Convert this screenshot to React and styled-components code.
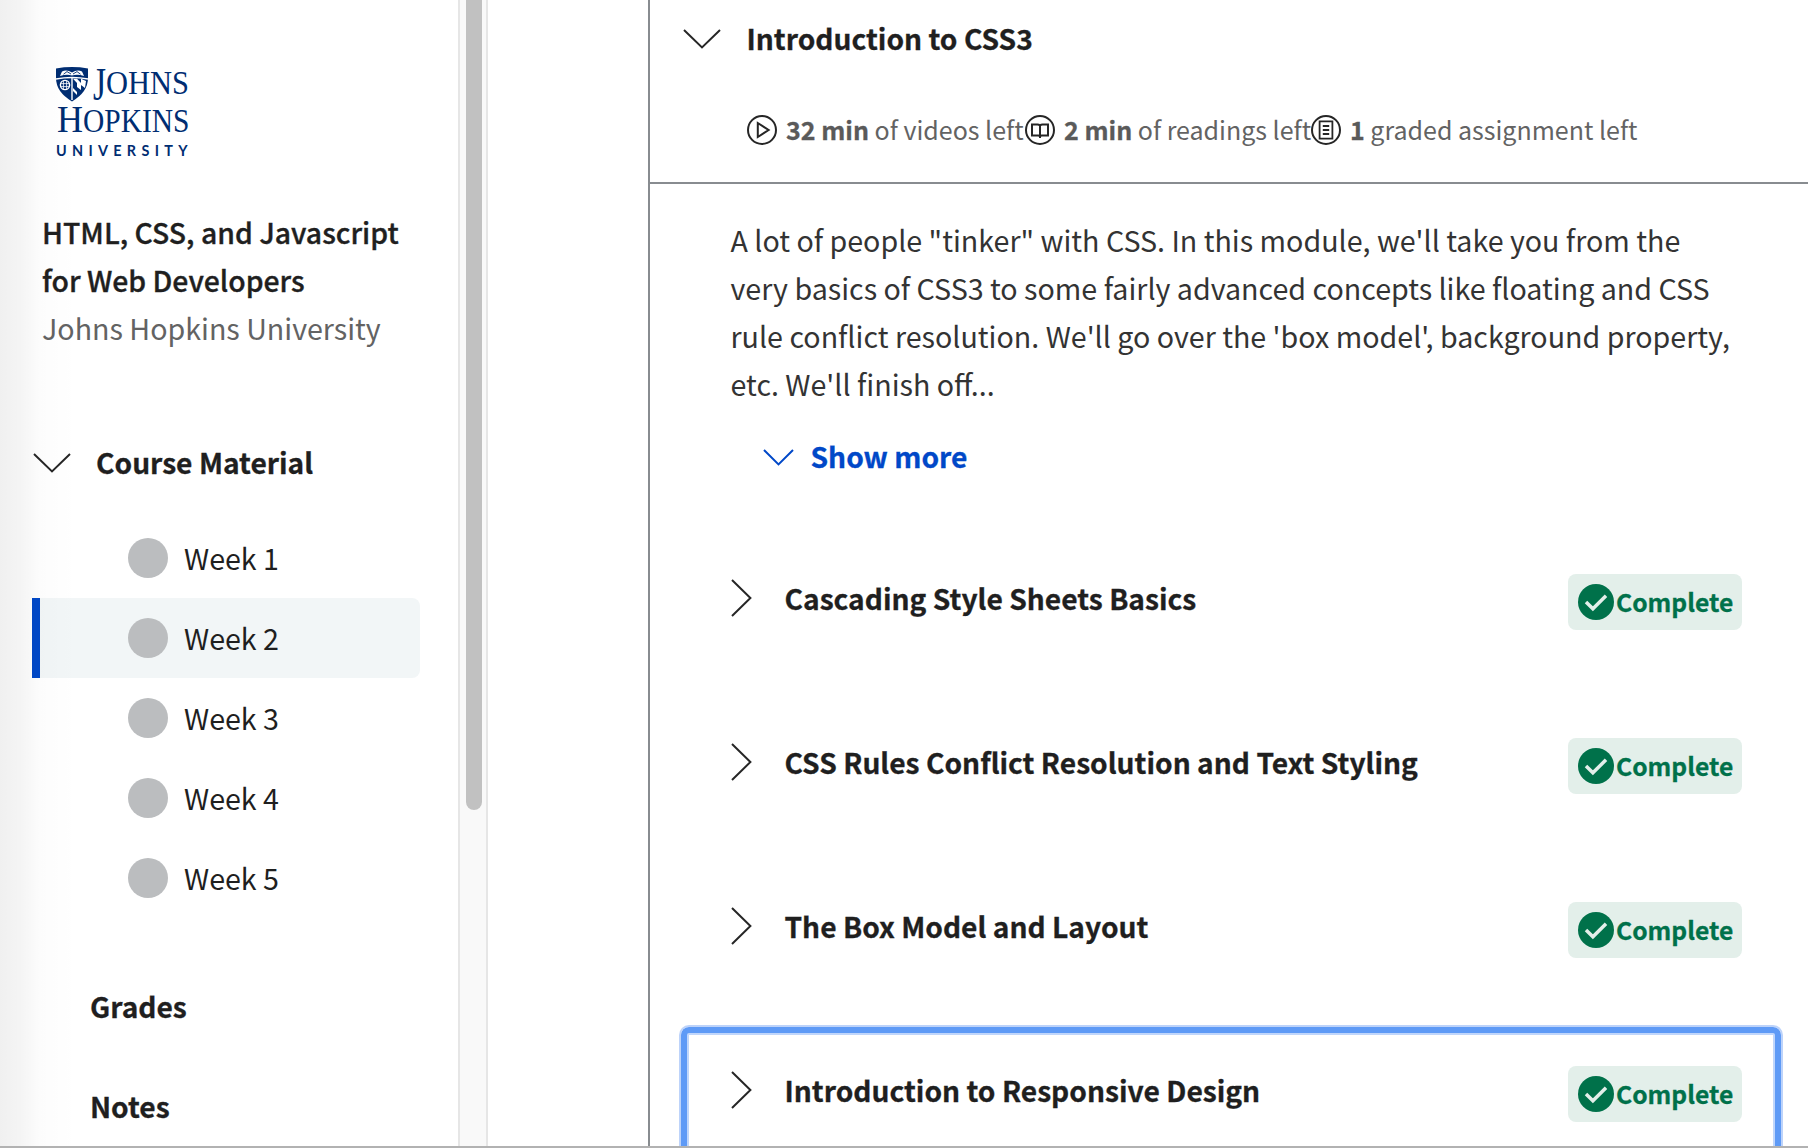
import React from "react";
import styled, { createGlobalStyle } from "styled-components";

const Global = createGlobalStyle`
  * { box-sizing: border-box; }
  body { margin: 0; overflow: hidden; background: #fff; font-family: "Noto Sans CJK SC", "Noto Sans", sans-serif; color: #1f1f1f; }
  h1, h2, h3, p, ul { margin: 0; padding: 0; list-style: none; font-size: inherit; font-weight: inherit; }
  svg { display: block; flex: none; }
`;

const Page = styled.div`
  position: relative;
  display: flex;
  width: 1808px;
  height: 1148px;
  overflow: hidden;
  border-bottom: 2px solid #b2b2b2;
`;

const Sidebar = styled.nav`
  width: 458px;
  flex: none;
  display: flex;
  flex-direction: column;
  padding: 66px 38px 0 32px;
`;

const EdgeShade = styled.div`
  position: absolute;
  left: 0;
  top: 0;
  bottom: 0;
  width: 78px;
  pointer-events: none;
  background: linear-gradient(to right, rgba(0,0,0,.06) 0, rgba(0,0,0,.042) 20px, rgba(0,0,0,.013) 40px, rgba(0,0,0,.004) 64px, transparent);
`;

const Logo = styled.svg`
  margin-left: 23px;
  width: 136px;
  height: 92px;
  overflow: visible;
`;

const CourseInfo = styled.div`
  margin: 50px 0 0 10px;
  font-size: 28.64px;
  line-height: 48px;
  white-space: nowrap;
`;
const CourseName = styled.h1`
  font-size: 28.37px;
  font-weight: 500;
  -webkit-text-stroke: 0.35px currentColor;
  white-space: pre;
`;
const School = styled.p`
  color: #636363;
`;

const SectionHead = styled.div`
  display: flex;
  align-items: center;
  height: 60px;
  margin-top: 80px;
  padding-left: 1px;
  svg { margin-top: 2px; }
`;
const SectionTitle = styled.h2`
  font-size: 28.2px;
  line-height: 48px;
  font-weight: 700;
  -webkit-text-stroke: 0.3px currentColor;
  margin-left: 25px;
`;

const Weeks = styled.ul`
  margin-top: 26px;
`;
const Week = styled.li`
  display: flex;
  align-items: center;
  height: 80px;
  width: 388px;
  padding-left: 88px;
  border-left: 8px solid ${(p) => (p.$active ? "#0048c8" : "transparent")};
  border-radius: 0 8px 8px 0;
  background: ${(p) => (p.$active ? "#f2f6f7" : "transparent")};
  background-clip: padding-box;
  font-size: 28.64px;
  line-height: 48px;
`;
const Dot = styled.span`
  width: 40px;
  height: 40px;
  margin-right: 16px;
  border-radius: 50%;
  background: #bbbdbf;
`;

const NavLink = styled.h2`
  font-size: 28.2px;
  line-height: 48px;
  font-weight: 700;
  -webkit-text-stroke: 0.3px currentColor;
  padding-left: 58px;
  margin-top: ${(p) => p.$gap}px;
`;

const Scrollbar = styled.div`
  width: 30px;
  flex: none;
  padding-left: 6px;
  border: solid #e6e6e6;
  border-width: 0 2px;
  background: #f9f9f9;
`;
const Thumb = styled.div`
  width: 16px;
  height: 810px;
  border-radius: 0 0 8px 8px;
  background: #c1c1c1;
`;

const Main = styled.main`
  flex: 1;
  margin-left: 160px;
  border-left: 2px solid #888c90;
`;

const ModuleHeader = styled.header`
  height: 184px;
  border-bottom: 2px solid #888c90;
`;
const ModuleTitleRow = styled.div`
  display: flex;
  align-items: center;
  height: 78px;
  padding-left: 33px;
`;
const ModuleTitle = styled.h2`
  font-size: 28.2px;
  line-height: 46px;
  margin-top: -2px;
  font-weight: 700;
  -webkit-text-stroke: 0.3px currentColor;
  margin-left: 25.5px;
`;
const Stats = styled.div`
  display: flex;
  align-items: center;
  height: 40px;
  margin-top: 32px;
  padding-left: 96px;
  color: #636363;
  font-size: 25px;
  white-space: nowrap;
`;
const Stat = styled.span`
  display: flex;
  align-items: center;
  height: 40px;
  line-height: 38px;
  width: ${(p) => p.$w}px;
  gap: 8px;
  span { margin-top: -2px; }
  b { color: #5a5a5a; -webkit-text-stroke: 0.3px currentColor; }
`;

const Body = styled.div`
  padding: 32px 26px 0 29px;
`;
const Summary = styled.p`
  padding-left: 51.5px;
  color: #333;
  font-size: 28.64px;
  line-height: 48px;
  white-space: pre;
`;
const ShowMore = styled.div`
  display: flex;
  align-items: center;
  height: 48px;
  margin-top: 24px;
  padding-left: 83.5px;
  gap: 17px;
  color: #0048c8;
  font-size: 28.2px;
  line-height: 48px;
  font-weight: 700;
  -webkit-text-stroke: 0.3px currentColor;
  svg { margin-top: 2px; }
`;

const Lessons = styled.ul`
  margin-top: 53px;
`;
const Lesson = styled.li`
  display: flex;
  height: 164px;
  width: 1104px;
  padding: 31px 31px 0 42px;
  border: 10px solid transparent;
  border-bottom: 0;
  border-radius: 10px 10px 0 0;
  box-shadow: none;
  ${(p) => p.$focused && `
    border: 2px solid #bdd3fa;
    border-bottom: 0;
    padding: 39px 39px 0 50px;
    box-shadow: inset 0 0 0 6px #5e9af6, inset 0 0 0 8px #c0d6fb;
  `}
`;
const Chevron = styled.svg`
  margin-top: 5px;
`;
const LessonTitle = styled.h3`
  flex: 1;
  margin-left: 31.5px;
  font-size: 28.2px;
  line-height: 48px;
  font-weight: 700;
  -webkit-text-stroke: 0.3px currentColor;
  white-space: nowrap;
`;
const Badge = styled.span`
  display: flex;
  align-items: center;
  width: 174px;
  height: 56px;
  padding-left: 10px;
  gap: 2px;
  border-radius: 8px;
  background: #e3efea;
  color: #00714a;
  font-size: 24.65px;
  line-height: 40px;
  font-weight: 700;
  -webkit-text-stroke: 0.3px currentColor;
`;
const BadgeText = styled.span`
  margin-top: -2px;
`;

const Down = ({ w = 38, h = 20, color = "#262626" }) => (
  <svg width={w} height={h} fill="none" stroke={color} strokeWidth="2">
    <path d={`M1 1L${w / 2} ${h - 1.6}L${w - 1} 1`} />
  </svg>
);
const Right = () => (
  <Chevron width="22" height="38" fill="none" stroke="#262626" strokeWidth="2">
    <path d="M1 1L19.4 19L1 37" />
  </Chevron>
);
const Ring = ({ children }) => (
  <svg width="32" height="32" fill="none" stroke="#262626" strokeWidth="2">
    <circle cx="16" cy="16" r="14" />
    {children}
  </svg>
);
const Check = () => (
  <svg width="36" height="36">
    <circle cx="18" cy="18" r="18" fill="#00714a" />
    <path d="M8 18L14.9 24.8L28 11.8" fill="none" stroke="#e3efea" strokeWidth="3.5" />
  </svg>
);

const JhuLogo = () => (
  <Logo viewBox="0 0 136 92" fill="#002d72">
    <path d="M1 2.4Q17 -.4 33 2.4V12Q33 26 17 35.4Q1 26 1 12Z" />
    <path d="M5 10L7 5.4Q12 3.4 17 6.4Q22 3.4 27 5.4L29 10Q22 7.6 17 9.6Q12 7.6 5 10Z" fill="#fff" />
    <path d="M8.5 8.2L12 5.6L16 8M18 8L22 5.6L25.5 8.2" fill="none" stroke="#002d72" strokeWidth=".9" />
    <path d="M1 13Q17 10 33 13" fill="none" stroke="#fff" strokeWidth="1.4" />
    <path d="M17 12V34" stroke="#fff" strokeWidth="1.4" />
    <circle cx="10" cy="19" r="4.6" fill="none" stroke="#fff" strokeWidth="1.4" />
    <path d="M8.4 14.5v9M11.6 14.5v9M5.5 17.6h9M5.5 20.6h9" stroke="#fff" strokeWidth=".8" />
    <path d="M18 12.8L22 17V21L26 24V19L30 22L31 15L26 12.8V17L22 12.8Z" fill="#fff" />
    <path d="M18 22L22 26V29L18 25Z" fill="#fff" />
    <g fontFamily="Liberation Serif, serif">
      <text x="38" y="34" fontSize="46" textLength="13" lengthAdjust="spacingAndGlyphs">J</text>
      <text x="51" y="27.5" fontSize="33" textLength="83" lengthAdjust="spacingAndGlyphs">OHNS</text>
      <text x="2" y="66" fontSize="38" textLength="26" lengthAdjust="spacingAndGlyphs">H</text>
      <text x="28" y="66" fontSize="33" textLength="106.5" lengthAdjust="spacingAndGlyphs">OPKINS</text>
    </g>
    <text x="1" y="89.5" fontFamily="Lato, sans-serif" fontWeight="700" fontSize="14.4" textLength="131.5">UNIVERSITY</text>
  </Logo>
);

const lessons = [
  "Cascading Style Sheets Basics",
  "CSS Rules Conflict Resolution and Text Styling",
  "The Box Model and Layout",
  "Introduction to Responsive Design",
];

export default function App() {
  return (
    <>
      <Global />
      <Page>
        <Sidebar>
          <JhuLogo />
          <CourseInfo>
            <CourseName>{"HTML, CSS, and Javascript\nfor Web Developers"}</CourseName>
            <School>Johns Hopkins University</School>
          </CourseInfo>
          <SectionHead>
            <Down />
            <SectionTitle>Course Material</SectionTitle>
          </SectionHead>
          <Weeks>
            {[1, 2, 3, 4, 5].map((n) => (
              <Week key={n} $active={n === 2}>
                <Dot />
                {`Week ${n}`}
              </Week>
            ))}
          </Weeks>
          <NavLink $gap={64}>Grades</NavLink>
          <NavLink $gap={52}>Notes</NavLink>
        </Sidebar>
        <Scrollbar>
          <Thumb />
        </Scrollbar>
        <Main>
          <ModuleHeader>
            <ModuleTitleRow>
              <Down />
              <ModuleTitle>Introduction to CSS3</ModuleTitle>
            </ModuleTitleRow>
            <Stats>
              <Stat $w={278}>
                <Ring><path d="M11.8 9L22.6 16L11.8 23Z" /></Ring>
                <span><b>32 min</b> of videos left</span>
              </Stat>
              <Stat $w={286}>
                <Ring><path d="M16 11.5V24M16 11.5Q15 10.6 13.5 10.6H8V21.6H14.5Q16 21.6 16 23Q16 21.6 17.5 21.6H24V10.6H18.5Q17 10.6 16 11.5" /></Ring>
                <span><b>2 min</b> of readings left</span>
              </Stat>
              <Stat $w={330}>
                <Ring><path d="M9.6 7.4H22.4V24.6H9.6ZM12.8 12H19.2M12.8 16H19.2M12.8 20H19.2" strokeWidth="1.8" /></Ring>
                <span><b>1</b> graded assignment left</span>
              </Stat>
            </Stats>
          </ModuleHeader>
          <Body>
            <Summary>
              {"A lot of people \"tinker\" with CSS. In this module, we'll take you from the\nvery basics of CSS3 to some fairly advanced concepts like floating and CSS\nrule conflict resolution. We'll go over the 'box model', background property,\netc. We'll finish off..."}
            </Summary>
            <ShowMore>
              <Down w={31} h={17} color="#0048c8" />
              Show more
            </ShowMore>
            <Lessons>
              {lessons.map((title, i) => (
                <Lesson key={title} $focused={i === 3}>
                  <Right />
                  <LessonTitle>{title}</LessonTitle>
                  <Badge><Check /><BadgeText>Complete</BadgeText></Badge>
                </Lesson>
              ))}
            </Lessons>
          </Body>
        </Main>
        <EdgeShade />
      </Page>
    </>
  );
}
